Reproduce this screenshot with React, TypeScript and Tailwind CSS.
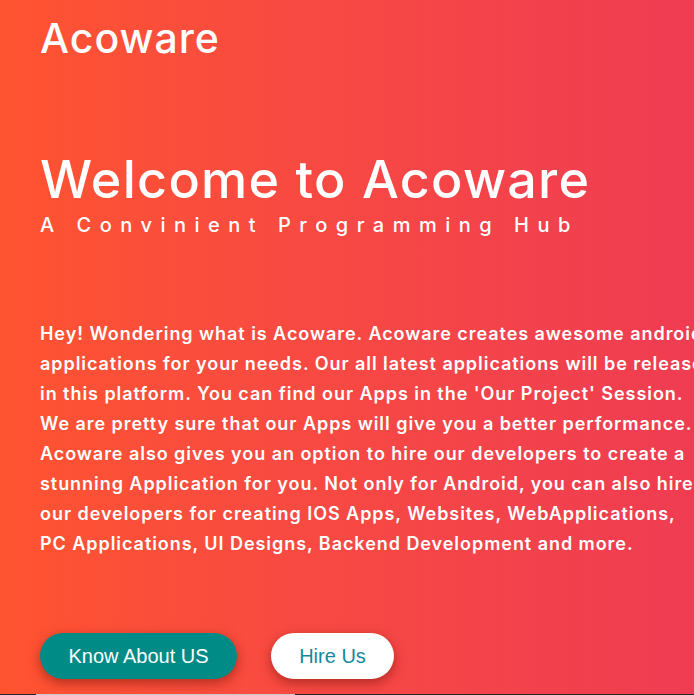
import React from "react";

const lines = [
  "Hey! Wondering what is Acoware. Acoware creates awesome android",
  "applications for your needs. Our all latest applications will be released",
  "in this platform. You can find our Apps in the 'Our Project' Session.",
  "We are pretty sure that our Apps will give you a better performance.",
  "Acoware also gives you an option to hire our developers to create a",
  "stunning Application for you. Not only for Android, you can also hire",
  "our developers for creating IOS Apps, Websites, WebApplications,",
  "PC Applications, UI Designs, Backend Development and more.",
];

export default function App() {
  return (
    <div className="w-[694px] h-[695px] overflow-hidden flex flex-col bg-gradient-to-r from-[#ff5330] to-[#ef3c52] text-white font-['Inter',sans-serif]">
      <div className="flex-1 flex flex-col pl-[40px]">
        <div className="pt-[14px] text-[41px] leading-[48px] font-medium tracking-[1px]">Acoware</div>
        <div className="mt-[88px] text-[52px] leading-[60px] font-medium tracking-[1.3px]">Welcome to Acoware</div>
        <div className="mt-[1px] text-[20px] leading-[28px] font-medium tracking-[8.5px]">A Convinient Programming Hub</div>
        <div className="mt-[80px] text-[18px] leading-[30px] font-semibold tracking-[0.95px] whitespace-nowrap">
          {lines.map((l) => (
            <div key={l}>{l}</div>
          ))}
        </div>
        <div className="mt-[74px] flex gap-[34px] font-['Liberation_Sans',Arial,sans-serif]">
          <button className="w-[197px] h-[46px] rounded-[23px] bg-[#008b87] text-white text-[20px] shadow-[0_4px_12px_rgba(120,20,10,0.55)]">
            Know About US
          </button>
          <button className="w-[123px] h-[46px] rounded-[23px] bg-white text-[#14899a] text-[20px] shadow-[0_4px_12px_rgba(120,20,10,0.55)]">
            Hire Us
          </button>
        </div>
      </div>
      <div className="h-px flex bg-[#262626]">
        <div className="ml-[36px] w-[259px] bg-[#c8c8c8]" />
      </div>
    </div>
  );
}
